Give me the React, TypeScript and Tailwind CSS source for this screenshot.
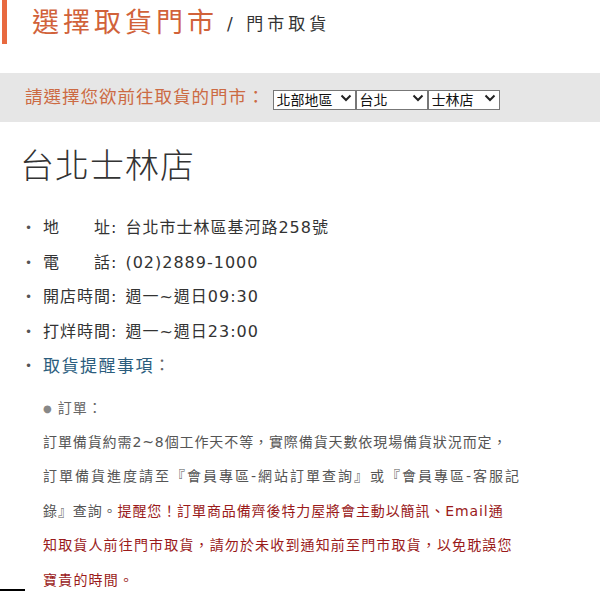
import React from 'react';

const font = { fontFamily: '"DejaVu Sans", "Noto Sans CJK TC", sans-serif' };

const selects = [
  { value: '北部地區', options: ['北部地區', '中部地區', '南部地區', '東部地區'], width: 'w-[83px]' },
  { value: '台北', options: ['台北', '新北', '桃園', '基隆'], width: 'w-[72px]' },
  { value: '士林店', options: ['士林店', '內湖店', '南港店', '中和店'], width: 'w-[72px]' },
];

const info = [
  { label: ['地', '址'], value: '台北市士林區基河路258號' },
  { label: ['電', '話'], value: '(02)2889-1000' },
  { label: ['開店時間'], value: '週一~週日09:30' },
  { label: ['打烊時間'], value: '週一~週日23:00' },
];

function Chevron() {
  return (
    <svg width="12" height="8" viewBox="0 0 12 8" className="pointer-events-none absolute right-[4px] top-[6px]">
      <path d="M1.5 1.5 L6 6 L10.5 1.5" fill="none" stroke="#222" strokeWidth="2" />
    </svg>
  );
}

export default function App() {
  return (
    <div className="relative w-[600px] h-[591px] overflow-hidden bg-white" style={font}>
      {/* page title */}
      <div className="ml-[2px] h-[44px] border-l-[5px] border-[#e8693f] pl-[25px] flex items-center">
        <h1 className="text-[27px] leading-none tracking-[4px] text-[#d1623a] font-normal">選擇取貨門市</h1>
        <span className="ml-[9px] mt-[6px] text-[17px] tracking-[4px] text-[#333]">/ 門市取貨</span>
      </div>

      {/* store picker */}
      <div className="mt-[29px] h-[49px] bg-[#e6e6e6] flex items-center pl-[25px]">
        <span className="text-[17.5px] text-[#cc6a43] tracking-[1px]">請選擇您欲前往取貨的門市：</span>
        <div className="ml-[7px] flex">
          {selects.map(s => (
            <div key={s.value} className={`relative ${s.width} h-[20px]`}>
              <select
                defaultValue={s.value}
                className="appearance-none w-full h-full border border-[#777] bg-white pl-[3px] text-[14px] leading-[18px] text-[#111] outline-none"
                style={font}
              >
                {s.options.map(o => (
                  <option key={o}>{o}</option>
                ))}
              </select>
              <Chevron />
            </div>
          ))}
        </div>
      </div>

      {/* store name */}
      <h2
        className="mt-[21px] ml-[20px] text-[34px] leading-[41px] text-[#333] font-light tracking-[1px]"
        style={{ fontFamily: '"Noto Sans CJK TC", sans-serif' }}
      >
        台北士林店
      </h2>

      {/* info list */}
      <ul className="mt-[27px] text-[16px] text-[#333] tracking-[1px]">
        {info.map(row => (
          <li key={row.value} className="flex items-center h-[34.5px]">
            <span className="w-[43px] pl-[25px] text-[12px] text-[#555]">•</span>
            {row.label.length === 2 ? (
              <span className="flex justify-between w-[68px]">
                <span>{row.label[0]}</span>
                <span>{row.label[1]}</span>
              </span>
            ) : (
              <span className="w-[68px]">{row.label[0]}</span>
            )}
            <span>:</span>
            <span className="ml-[8px]">{row.value}</span>
          </li>
        ))}
        <li className="flex items-center h-[34.5px]">
          <span className="w-[43px] pl-[25px] text-[12px] text-[#555]">•</span>
          <span className="text-[17px] tracking-[1.5px] text-[#2b5d7d]">取貨提醒事項</span>
          <span className="text-[#666]">：</span>
        </li>
      </ul>

      {/* notes */}
      <div className="mt-[13px] ml-[43px] flex items-center h-[24px] text-[14px] text-[#666] tracking-[1px]">
        <span className="text-[10px] text-[#888] mr-[5px]">●</span>
        <span>訂單：</span>
      </div>
      <div className="mt-[4px] ml-[43px] text-[14px] leading-[34.5px] text-[#555] whitespace-nowrap">
        <div className="tracking-[0.9px]">訂單備貨約需2~8個工作天不等，實際備貨天數依現場備貨狀況而定，</div>
        <div className="tracking-[2px]">訂單備貨進度請至『會員專區-網站訂單查詢』或『會員專區-客服記</div>
        <div className="tracking-[0.9px]">
          錄』查詢。<span className="text-[#9a1a1a]">提醒您！訂單商品備齊後特力屋將會主動以簡訊、Email通</span>
        </div>
        <div className="tracking-[1.15px] text-[#9a1a1a]">知取貨人前往門市取貨，請勿於未收到通知前至門市取貨，以免耽誤您</div>
        <div className="tracking-[1.2px] text-[#9a1a1a]">寶貴的時間。</div>
      </div>

      <div className="absolute left-0 bottom-0 w-[25px] h-[2px] bg-black" />
    </div>
  );
}
